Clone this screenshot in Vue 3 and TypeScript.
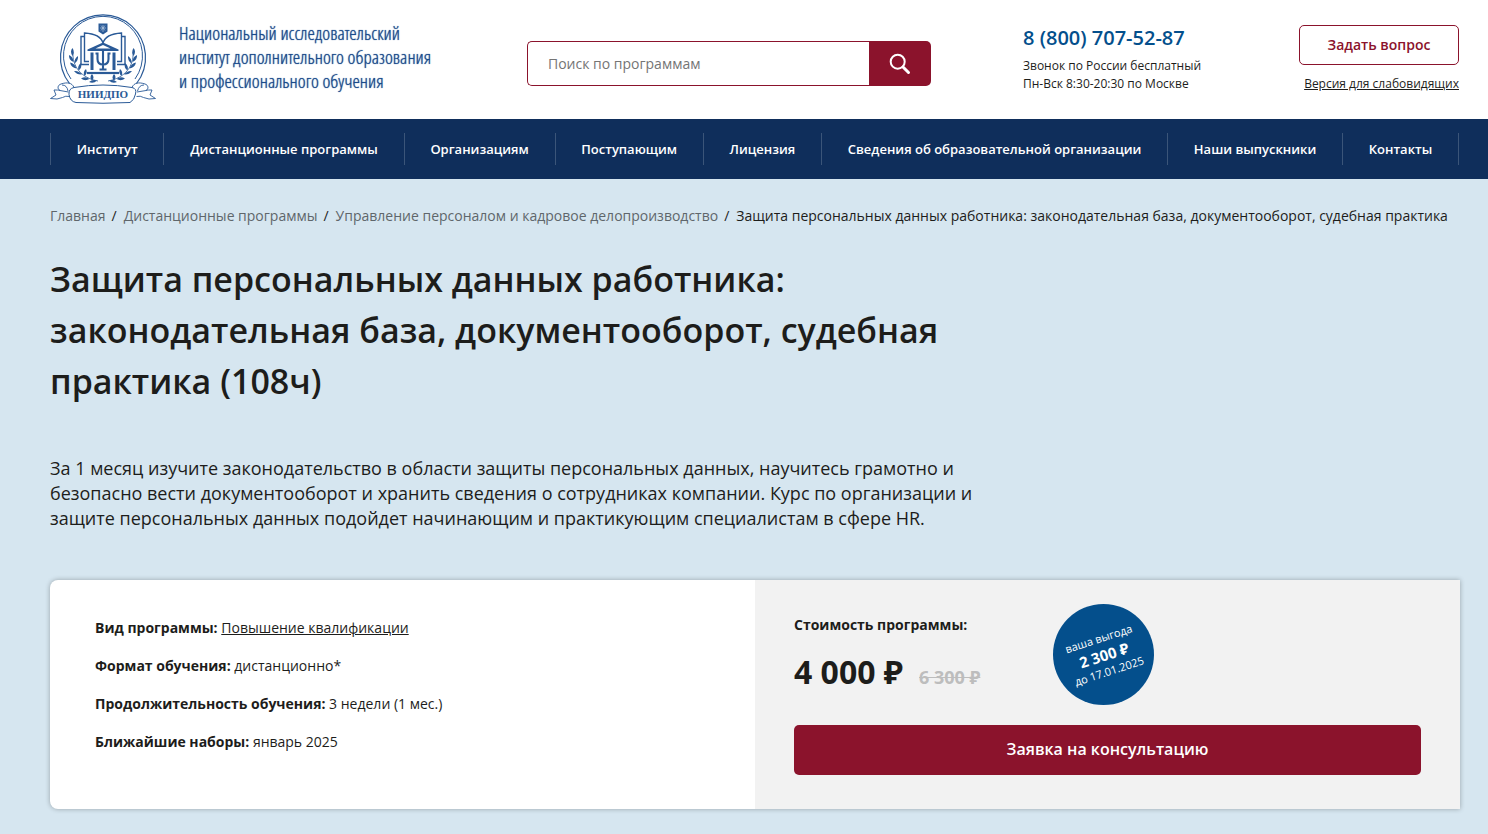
<script setup lang="ts">
interface Crumb {
  title: string
  current?: boolean
}

interface Fact {
  label: string
  value: string
  link?: boolean
}

const menu: string[] = [
  'Институт',
  'Дистанционные программы',
  'Организациям',
  'Поступающим',
  'Лицензия',
  'Сведения об образовательной организации',
  'Наши выпускники',
  'Контакты',
]

const crumbs: Crumb[] = [
  { title: 'Главная' },
  { title: 'Дистанционные программы' },
  { title: 'Управление персоналом и кадровое делопроизводство' },
  {
    title:
      'Защита персональных данных работника: законодательная база, документооборот, судебная практика',
    current: true,
  },
]

const facts: Fact[] = [
  { label: 'Вид программы:', value: 'Повышение квалификации', link: true },
  { label: 'Формат обучения:', value: 'дистанционно*' },
  { label: 'Продолжительность обучения:', value: '3 недели (1 мес.)' },
  { label: 'Ближайшие наборы:', value: 'январь 2025' },
]
</script>

<template>
  <div class="page">
    <header class="header">
      <a class="brand" href="#">
        <svg class="emblem" viewBox="0 0 106 90" width="106" height="90" fill="none" stroke="#2a5a97" aria-hidden="true">
          <path d="M19.500 69.500A42.500 42.500 0 1 1 86.500 69.500" stroke-width="1.200" />
          <path d="M21 65A39.500 39.500 0 1 1 85 65" stroke-width="1" />
          <path d="M48.500 9.500h9v8l-4.500 3l-4.500-3z" fill="#2a5a97" stroke="none" />
          <path d="M51 11.500l4 5M55 11.500l-4 5M53 11v7M50 14h6" stroke="#b5c8df" stroke-width=".7" />
          <path d="M53 29C51 22 43 19.500 34.500 19v28.500h4.500M53 29C55 22 63 19.500 71.500 19v28.500h-4.500" stroke-width="1.400" />
          <path d="M34 22.500h-3v28h8M72 22.500h3v28h-8" stroke-width="1.400" />
          <path d="M53 28.500L37.500 35.500v1.500h31v-1.500z" fill="#2a5a97" stroke="none" />
          <path d="M45.500 34.500l7.500-3.500 7.500 3.500z" fill="#fff" stroke="none" />
          <path d="M42 38.500v17.500M64 38.500v17.500" stroke-width="3" />
          <path d="M53 36v19.500M45.500 39.500h2v5.500c0 4 2 5.500 5.500 5.500s5.500-1.500 5.500-5.500v-5.500h2M49.500 55.500h7" stroke-width="2.100" />
          <path d="M37 59h32" stroke-width="2.200" />
          <path d="M23 38c-1 14 8 26 25 29M83 38c1 14-8 26-25 29" stroke-width=".8" />
          <g fill="#2a5a97" stroke="none">
            <path d="M22.500 34q-3 3.500 0 8q2.500-4 0-8zM19 41q-.5 5 4.500 7q0-5-4.500-7zM28 42q-4 2.500-3.500 7.500q4-3 3.500-7.500zM20 48.500q1 5 6.500 6q-1.500-5-6.500-6zM31 49q-4 3-2.500 7.500q4-3 2.500-7.500zM24 57q3 4 8 3.500q-3-4-8-3.500zM36 55q-3.500 3-1.500 7q3.500-3 1.500-7zM31 64.500q4 3 8.500.5q-4-3-8.500-.5zM42 60q-3 3 0 6.500q3-3 0-6.500zM39 68q4.500 2 8-1.500q-4.500-1.500-8 1.500z" />
            <path d="M83.500 34q3 3.500 0 8q-2.500-4 0-8zM87 41q.5 5-4.500 7q0-5 4.500-7zM78 42q4 2.500 3.500 7.500q-4-3-3.500-7.500zM86 48.500q-1 5-6.500 6q1.500-5 6.500-6zM75 49q4 3 2.500 7.500q-4-3-2.500-7.500zM82 57q-3 4-8 3.500q3-4 8-3.500zM70 55q3.500 3 1.500 7q-3.500-3-1.500-7zM75 64.500q-4 3-8.500.5q4-3 8.500-.5zM64 60q3 3 0 6.500q-3-3 0-6.500zM67 68q-4.500 2-8-1.500q4.500-1.500 8 1.500z" />
          </g>
          <path d="M24 73.500Q53 68.500 82 73.500q5 1 3.500 6.500q-1 6-5.500 8.500Q53 90 26 88.500q-6-1-7-8q-.5-6 5-7z" fill="#fff" stroke-width="1" />
          <path d="M24 73.500c-2-5-7-5.500-13-3.500c-3.500 1-4 5-1 6.500l8.500 1.500M10 76.500c-1.500-.5-3-.5-6-.5l2 5l-5.500 3.500q7 1.500 12-1q3-2 7-1M12 71q5 0 6 6M82 73.500c2-5 7-5.500 13-3.500c3.500 1 4 5 1 6.500l-9 1.500M96 76.500c1.500-.5 3-.5 6-.5l-2 5l5.500 3.500q-7 1.500-12-1q-3-2-7-1M94 71q-5 0-6.500 6" stroke-width=".9" />
          <text x="53" y="84" text-anchor="middle" class="emblem-text">НИИДПО</text>
        </svg>
        <span class="brand-name">
          Национальный исследовательский<br />институт дополнительного образования<br />и профессионального обучения
        </span>
      </a>

      <form class="search" role="search" @submit.prevent>
        <input class="search-input" type="search" placeholder="Поиск по программам" aria-label="Поиск по программам" />
        <button class="search-button" type="submit" aria-label="Найти">
          <svg viewBox="0 0 22 22" width="22" height="22" fill="none" stroke="#fff" stroke-linecap="round" aria-hidden="true">
            <circle cx="8.700" cy="8.700" r="7" stroke-width="2" />
            <path d="M14 14l5.500 5.500" stroke-width="3" />
          </svg>
        </button>
      </form>

      <div class="contacts">
        <a class="phone" href="tel:88007075287">8 (800) 707-52-87</a>
        <div class="hours">Звонок по России бесплатный<br />Пн-Вск 8:30-20:30 по Москве</div>
      </div>

      <div class="actions">
        <button class="ask" type="button">Задать вопрос</button>
        <a class="accessible" href="#">Версия для слабовидящих</a>
      </div>
    </header>

    <nav class="nav" aria-label="Главное меню">
      <ul class="menu">
        <li v-for="item in menu" :key="item" class="menu-item">
          <a href="#">{{ item }}</a>
        </li>
      </ul>
    </nav>

    <main class="main">
      <ol class="crumbs">
        <li v-for="crumb in crumbs" :key="crumb.title" class="crumb">
          <span v-if="crumb.current">{{ crumb.title }}</span>
          <a v-else href="#">{{ crumb.title }}</a>
        </li>
      </ol>

      <h1 class="title">
        Защита персональных данных работника: законодательная база, документооборот, судебная практика (108ч)
      </h1>

      <p class="lead">
        За 1 месяц изучите законодательство в области защиты персональных данных, научитесь грамотно и
        безопасно вести документооборот и хранить сведения о сотрудниках компании. Курс по организации и
        защите персональных данных подойдет начинающим и практикующим специалистам в сфере HR.
      </p>

      <section class="card">
        <div class="facts">
          <p v-for="fact in facts" :key="fact.label" class="fact">
            <b>{{ fact.label }}</b>{{ ' ' }}<a v-if="fact.link" href="#">{{ fact.value }}</a><span v-else>{{ fact.value }}</span>
          </p>
        </div>
        <div class="offer">
          <div class="offer-top">
            <div class="cost">
              <div class="cost-label">Стоимость программы:</div>
              <div class="prices">
                <span class="price">4 000 ₽</span>
                <s class="old-price">6 300 ₽</s>
              </div>
            </div>
            <div class="benefit">
              <div class="benefit-text">ваша выгода<b>2 300 ₽</b>до 17.01.2025</div>
            </div>
          </div>
          <button class="apply" type="button">Заявка на консультацию</button>
        </div>
      </section>
    </main>
  </div>
</template>

<style>
body {
  margin: 0;
  background: #d6e6f0;
}
</style>

<style scoped>
.page {
  font-family: 'Open Sans', 'Noto Sans', sans-serif;
  font-size: 14px;
  font-weight: 400;
  color: #1d1d1b;
}

.page * {
  box-sizing: border-box;
}

a {
  color: inherit;
}

button,
input {
  font-family: inherit;
}

button {
  cursor: pointer;
}

.header {
  display: grid;
  grid-template-columns: 477fr 496fr 276fr 160px;
  padding: 14px 29px 15px 50px;
  background: #fff;
}

.brand {
  display: flex;
  gap: 23px;
  text-decoration: none;
}

.emblem {
  flex: none;
}

.emblem-text {
  font: bold 11px 'Liberation Serif', serif;
  fill: #2a5a97;
  stroke: none;
}

.brand-name {
  padding-top: 7px;
  font-family: 'Open Sans Condensed Light', 'Open Sans Condensed', sans-serif;
  font-size: 19px;
  font-weight: 400;
  line-height: 24px;
  white-space: nowrap;
  color: #1a4b8c;
  text-shadow: 0 0 1px #1a4b8c;
}

.search {
  display: flex;
  width: 404px;
  height: 45px;
  margin-top: 27px;
}

.search-input {
  flex: 1;
  min-width: 0;
  padding: 0 20px;
  border: 1px solid #8b132c;
  border-right: 0;
  border-radius: 5px 0 0 5px;
  outline: 0;
  appearance: none;
  background: #fff;
  font-size: 14px;
}

.search-input::placeholder {
  color: #757575;
}

.search-button {
  display: flex;
  align-items: center;
  justify-content: center;
  width: 62px;
  padding: 0;
  border: 0;
  border-radius: 0 5px 5px 0;
  background: #8b132c;
}

.contacts {
  padding-top: 11px;
}

.phone {
  display: block;
  font-size: 20px;
  font-weight: 600;
  line-height: 26px;
  color: #044f8c;
  text-decoration: none;
}

.hours {
  margin-top: 6px;
  font-size: 12px;
  line-height: 18px;
}

.actions {
  display: flex;
  flex-direction: column;
  align-items: flex-end;
  padding-top: 11px;
}

.ask {
  width: 100%;
  height: 40px;
  padding: 0 0 2px;
  border: 1px solid #8b132c;
  border-radius: 5px;
  background: #fff;
  font-size: 14px;
  font-weight: 600;
  color: #8b132c;
}

.accessible {
  margin-top: 10px;
  font-size: 12px;
  line-height: 18px;
  white-space: nowrap;
}

.nav {
  padding: 14px 29px 14px 50px;
  background: #0f2e5b;
}

.menu {
  display: flex;
  margin: 0;
  padding: 0;
  border-left: 1px solid #3b5579;
  list-style: none;
}

.menu-item {
  flex: 1 1 auto;
  border-right: 1px solid #3b5579;
  font-size: 13px;
  font-weight: 600;
  line-height: 32px;
  text-align: center;
  white-space: nowrap;
  color: #fff;
}

.menu-item a {
  text-decoration: none;
}

.main {
  padding: 26px 28px 25px 50px;
}

.crumbs {
  display: flex;
  flex-wrap: wrap;
  margin: 0;
  padding: 0;
  list-style: none;
  line-height: 22px;
}

.crumb a {
  color: #5f666b;
  text-decoration: none;
}

.crumb + .crumb::before {
  content: '/';
  margin: 0 7px 0 6px;
}

.title {
  max-width: 940px;
  margin: 27px 0 0;
  font-size: 34px;
  font-weight: 600;
  line-height: 51px;
}

.lead {
  max-width: 940px;
  margin: 49px 0 0;
  font-size: 18px;
  line-height: 25px;
}

.card {
  display: grid;
  grid-template-columns: 1fr 1fr;
  margin-top: 49px;
  overflow: hidden;
  border-radius: 8px 0 0 8px;
  background: #fff;
  box-shadow: 0 0 5px rgba(0, 0, 0, 0.3);
}

.facts {
  display: flex;
  flex-direction: column;
  gap: 18px;
  padding: 38px 45px;
}

.fact {
  margin: 0;
  line-height: 20px;
}

.fact b {
  font-weight: 700;
}

.offer {
  padding: 24px 39px 34px;
  background: #f2f2f2;
}

.offer-top {
  display: flex;
  align-items: flex-start;
}

.cost {
  width: 259px;
  padding-top: 11px;
}

.cost-label {
  font-weight: 700;
  line-height: 20px;
}

.prices {
  display: flex;
  align-items: baseline;
  gap: 16px;
  margin-top: 13px;
  font-weight: 700;
  line-height: 48px;
  white-space: nowrap;
}

.price {
  font-size: 32px;
}

.old-price {
  font-size: 18px;
  color: #bdbdbd;
}

.benefit {
  display: flex;
  align-items: center;
  justify-content: center;
  width: 101px;
  height: 101px;
  border-radius: 50%;
  background: #044f8c;
}

.benefit-text {
  transform: rotate(-18deg);
  font-size: 11px;
  line-height: 16px;
  text-align: center;
  white-space: nowrap;
  color: #fff;
}

.benefit-text b {
  display: block;
  font-size: 15px;
  line-height: 18px;
}

.apply {
  width: 100%;
  height: 50px;
  margin-top: 20px;
  padding: 0 0 2px;
  border: 0;
  border-radius: 5px;
  background: #8b132c;
  font-size: 16px;
  font-weight: 600;
  color: #fff;
}
</style>
